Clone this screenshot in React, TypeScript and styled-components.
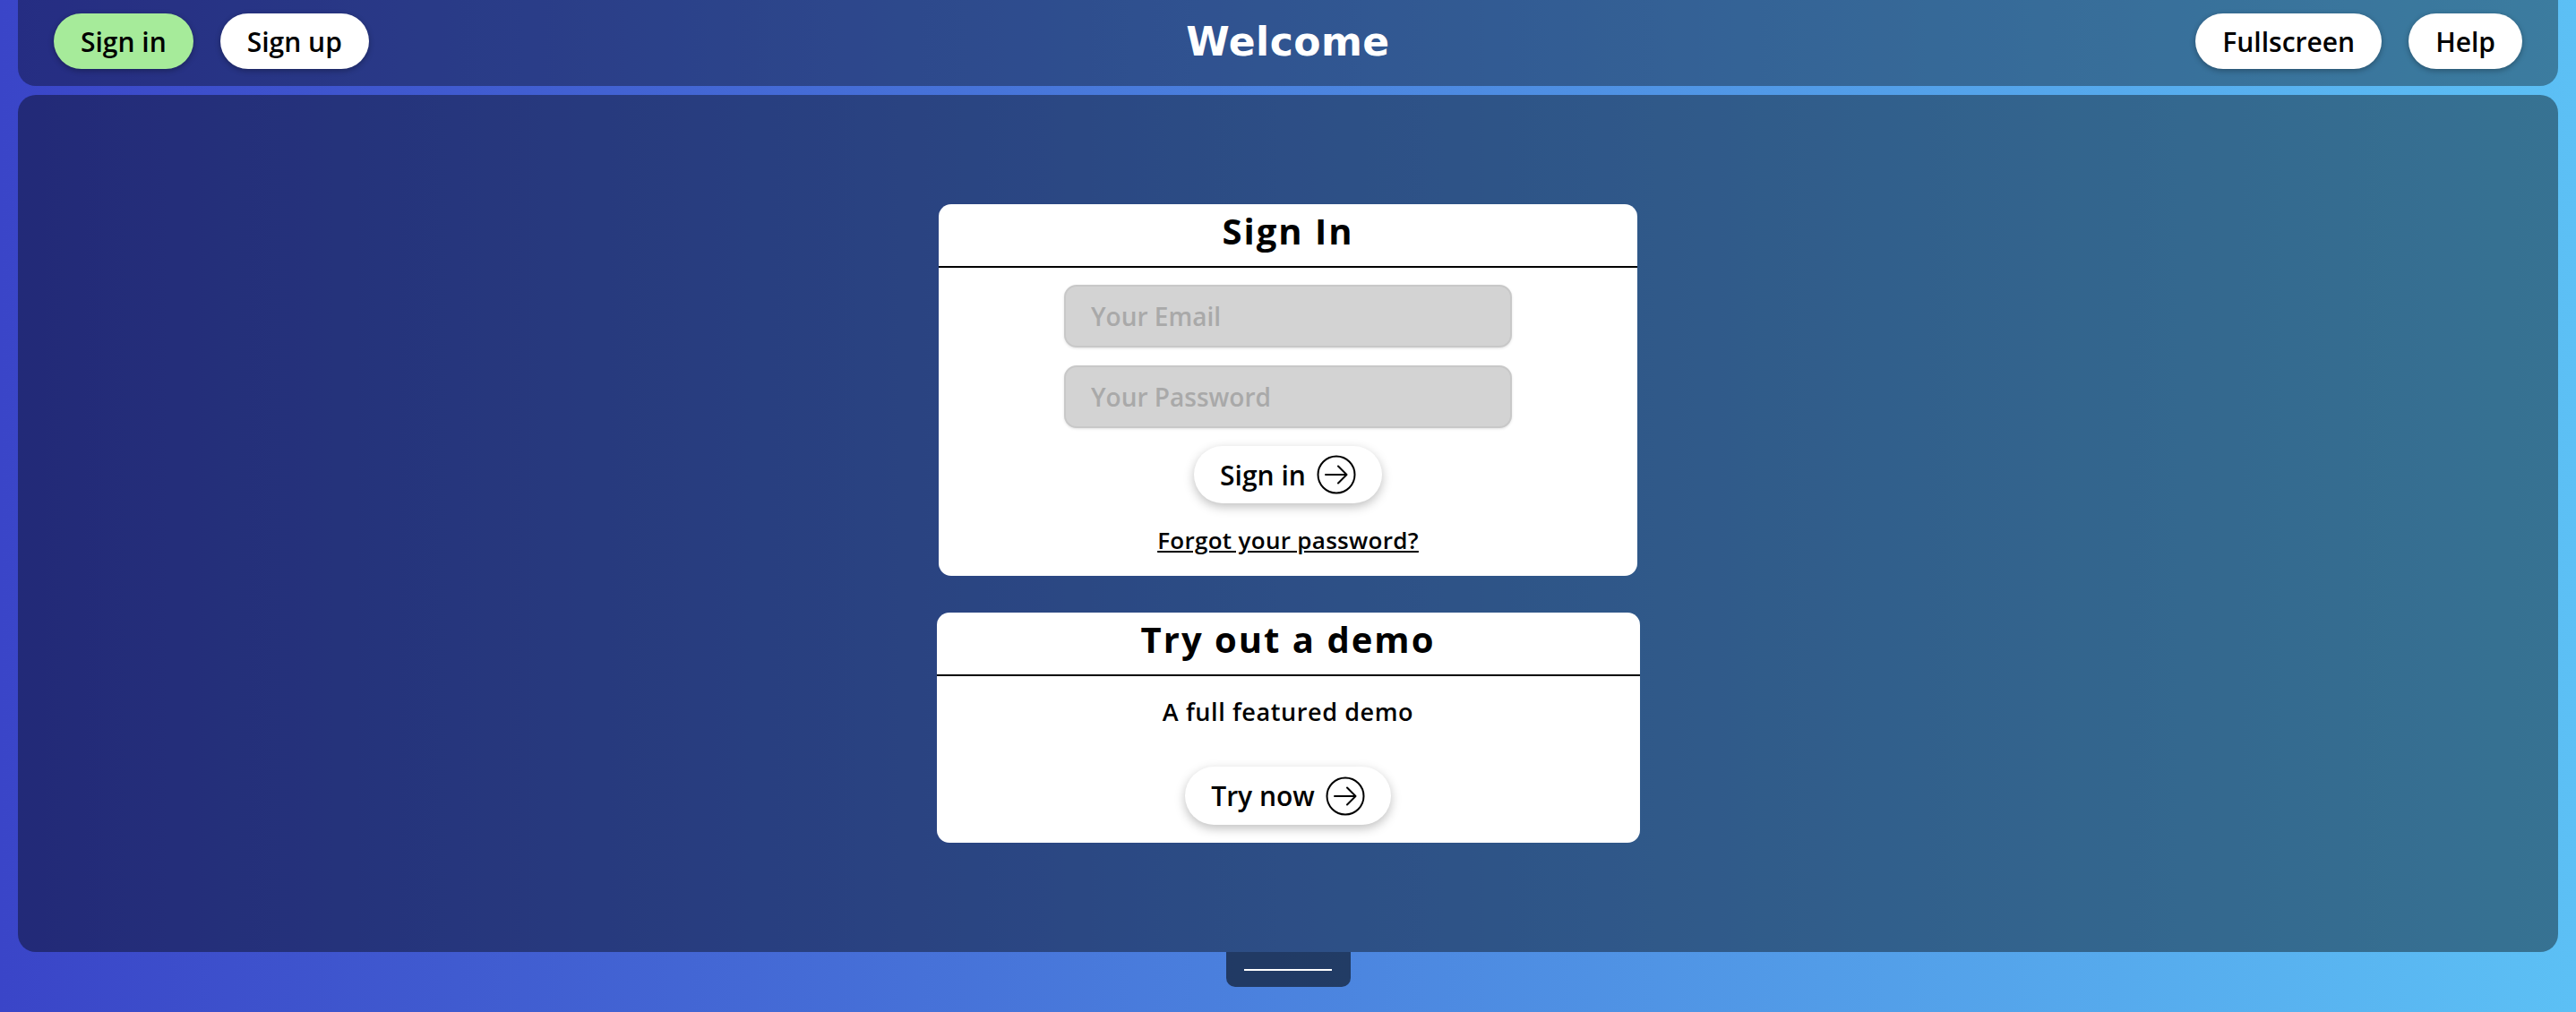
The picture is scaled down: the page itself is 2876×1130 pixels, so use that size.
import React from "react";
import styled, { createGlobalStyle } from "styled-components";

const GlobalStyle = createGlobalStyle`
  html, body {
    margin: 0;
    padding: 0;
  }
  body {
    background: linear-gradient(to right, #3a45c8, #5cc0f5);
    font-family: "Open Sans", "Noto Sans", sans-serif;
    color: #000;
  }
  * {
    box-sizing: border-box;
  }
`;

const PageEl = styled.div`
  height: 100vh;
  display: flex;
  flex-direction: column;
  padding: 0 20px 28px;
`;

const HeaderEl = styled.header`
  height: 96px;
  flex-shrink: 0;
  display: grid;
  grid-template-columns: 1fr auto 1fr;
  align-items: center;
  padding: 0 40px 4px;
  background: rgba(0, 0, 0, 0.35);
  border-radius: 0 0 20px 20px;
`;

const NavGroupEl = styled.nav<{ $end?: boolean }>`
  display: flex;
  gap: 30px;
  justify-content: ${(p) => (p.$end ? "flex-end" : "flex-start")};
`;

const NavButtonEl = styled.button<{ $active?: boolean }>`
  height: 62px;
  padding: 0 30px;
  border: none;
  border-radius: 31px;
  background: ${(p) => (p.$active ? "#a6eb9a" : "#fff")};
  box-shadow: 0 2px 6px rgba(0, 0, 0, 0.3);
  font-family: "Open Sans", sans-serif;
  font-size: 30px;
  font-weight: 600;
  color: #000;
  cursor: pointer;
`;

const TitleEl = styled.h1`
  margin: 0;
  font-family: "DejaVu Sans", Verdana, sans-serif;
  font-size: 44px;
  font-weight: 700;
  color: #fff;
  letter-spacing: 0.5px;
`;

const MainEl = styled.main`
  flex: 1;
  margin-top: 10px;
  display: flex;
  flex-direction: column;
  align-items: center;
  justify-content: center;
  gap: 41px;
  background: rgba(0, 0, 0, 0.4);
  border-radius: 20px;
`;

const CardEl = styled.section<{ $width: number }>`
  width: ${(p) => p.$width}px;
  background: #fff;
  border-radius: 14px;
  overflow: hidden;
`;

const CardHeaderEl = styled.div`
  height: 71px;
  display: flex;
  align-items: center;
  justify-content: center;
  padding-bottom: 10px;
  border-bottom: 2px solid #000;
`;

const CardTitleEl = styled.h2`
  margin: 0;
  font-size: 40px;
  font-weight: 700;
  letter-spacing: 2px;
`;

const CardBodyEl = styled.div<{ $gap: number; $pad: string }>`
  display: flex;
  flex-direction: column;
  align-items: center;
  gap: ${(p) => p.$gap}px;
  padding: ${(p) => p.$pad};
`;

const InputEl = styled.input`
  width: 500px;
  height: 70px;
  padding: 0 28px;
  border: 2px solid #c8c8c8;
  border-radius: 14px;
  background: #d3d3d3;
  box-shadow: 0 1px 3px rgba(0, 0, 0, 0.12);
  font-family: "Open Sans", sans-serif;
  font-size: 28px;
  font-weight: 600;
  color: #000;
  outline: none;

  &::placeholder {
    color: #a9a9a9;
  }
`;

const ActionButtonEl = styled.button<{ $height: number }>`
  height: ${(p) => p.$height}px;
  display: flex;
  align-items: center;
  gap: 12px;
  padding: 0 29px;
  border: none;
  border-radius: 33px;
  background: #fff;
  box-shadow: 0 4px 12px rgba(0, 0, 0, 0.25);
  font-family: "Open Sans", sans-serif;
  font-size: 30px;
  font-weight: 600;
  color: #000;
  cursor: pointer;
`;

const LinkEl = styled.a`
  margin-top: 3px;
  font-size: 26px;
  font-weight: 600;
  letter-spacing: 0.3px;
  color: #000;
  text-decoration: underline;
  cursor: pointer;
`;

const TextEl = styled.p`
  margin: 0;
  font-size: 27px;
  font-weight: 600;
  letter-spacing: 0.6px;
`;

const TabEl = styled.div`
  width: 139px;
  height: 39px;
  flex-shrink: 0;
  align-self: center;
  display: flex;
  align-items: center;
  justify-content: center;
  background: rgba(0, 0, 0, 0.55);
  border-radius: 0 0 10px 10px;
`;

const TabLineEl = styled.span`
  width: 98px;
  height: 2px;
  background: #fff;
`;

const ArrowCircle = () => (
  <svg width="44" height="44" viewBox="0 0 44 44" fill="none" stroke="#000" strokeWidth="2" strokeLinecap="round" strokeLinejoin="round">
    <circle cx="22" cy="22" r="20.5" />
    <path d="M10 22h23" />
    <path d="M24 12.5l9.5 9.5-9.5 9.5" />
  </svg>
);

export default function App() {
  return (
    <>
      <GlobalStyle />
      <PageEl>
        <HeaderEl>
          <NavGroupEl>
            <NavButtonEl $active>Sign in</NavButtonEl>
            <NavButtonEl>Sign up</NavButtonEl>
          </NavGroupEl>
          <TitleEl>Welcome</TitleEl>
          <NavGroupEl $end>
            <NavButtonEl>Fullscreen</NavButtonEl>
            <NavButtonEl>Help</NavButtonEl>
          </NavGroupEl>
        </HeaderEl>

        <MainEl>
          <CardEl $width={780}>
            <CardHeaderEl>
              <CardTitleEl>Sign In</CardTitleEl>
            </CardHeaderEl>
            <CardBodyEl $gap={20} $pad="19px 0 22px">
              <InputEl type="email" placeholder="Your Email" />
              <InputEl type="password" placeholder="Your Password" />
              <ActionButtonEl $height={64}>
                Sign in <ArrowCircle />
              </ActionButtonEl>
              <LinkEl>Forgot your password?</LinkEl>
            </CardBodyEl>
          </CardEl>

          <CardEl $width={785}>
            <CardHeaderEl>
              <CardTitleEl>Try out a demo</CardTitleEl>
            </CardHeaderEl>
            <CardBodyEl $gap={43} $pad="21px 0 20px">
              <TextEl>A full featured demo</TextEl>
              <ActionButtonEl $height={65}>
                Try now <ArrowCircle />
              </ActionButtonEl>
            </CardBodyEl>
          </CardEl>
        </MainEl>

        <TabEl>
          <TabLineEl />
        </TabEl>
      </PageEl>
    </>
  );
}
